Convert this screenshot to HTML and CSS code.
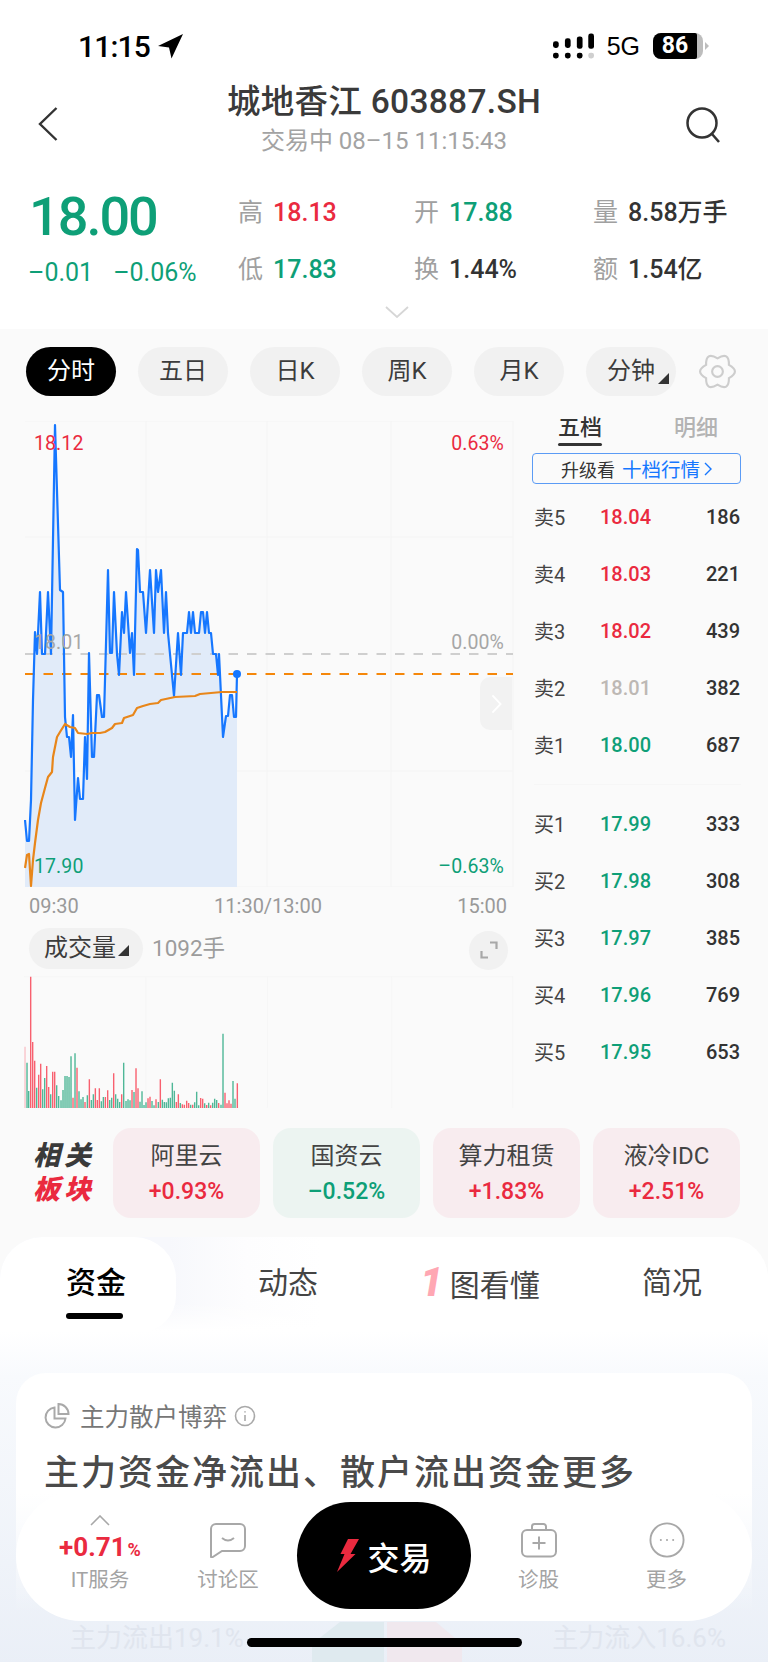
FILE: index.html
```html
<!DOCTYPE html>
<html lang="zh-CN">
<head>
<meta charset="utf-8">
<title>城地香江 603887.SH</title>
<link rel="stylesheet" href="styles.css">
</head>
<body>
<div class="page">
  <header class="top">
    <div class="status">
      <span class="clock">11:15</span>
      <svg class="locate" viewBox="0 0 26 25"><path d="M25 0 0 12l11 1.500L13.500 24.500z"/></svg>
      <span class="status-gap"></span>
      <svg class="signal" viewBox="0 0 43 26">
        <rect x="0" y="8" width="6" height="7" rx="2.500"/><rect x="12.500" y="5" width="6" height="10" rx="2.500"/>
        <rect x="25" y="3" width="6" height="13" rx="2.500"/><rect x="37" y="0" width="6" height="16" rx="2.500"/>
        <rect x="0" y="20" width="6" height="6" rx="2.500"/><rect x="12.500" y="20" width="6" height="6" rx="2.500"/>
        <rect x="25" y="20" width="6" height="6" rx="2.500"/><rect class="signal-off" x="37" y="20" width="6" height="6" rx="2.500"/>
      </svg>
      <span class="network">5G</span>
      <span class="battery"><span class="battery-level">86</span></span>
    </div>
    <nav class="nav">
      <svg class="back" viewBox="0 0 20 34"><path d="M18.500 1 2 17l16.500 16"/></svg>
      <div class="title-block">
        <div class="title">城地香江 603887.SH</div>
        <div class="subtitle">交易中 08–15 11:15:43</div>
      </div>
      <svg class="search" viewBox="0 0 36 36"><circle cx="17" cy="16" r="14.500"/><path d="m27 27 7 8"/></svg>
    </nav>
    <section class="quote">
      <div class="price-col">
        <div class="price down">18.00</div>
        <div class="change down"><span>–0.01</span><span>–0.06%</span></div>
      </div>
      <div class="stats">
        <div class="stat"><span class="stat-label">高</span><span class="up">18.13</span></div>
        <div class="stat"><span class="stat-label">开</span><span class="down">17.88</span></div>
        <div class="stat"><span class="stat-label">量</span><span class="plain">8.58万手</span></div>
        <div class="stat"><span class="stat-label">低</span><span class="down">17.83</span></div>
        <div class="stat"><span class="stat-label">换</span><span class="plain">1.44%</span></div>
        <div class="stat"><span class="stat-label">额</span><span class="plain">1.54亿</span></div>
      </div>
    </section>
    <svg class="expand-quote" viewBox="0 0 24 12"><path d="m1 1 11 10L23 1"/></svg>
  </header>

  <div class="periods">
    <span class="period active">分时</span>
    <span class="period">五日</span>
    <span class="period">日K</span>
    <span class="period">周K</span>
    <span class="period">月K</span>
    <span class="period">分钟<i class="corner corner-period"></i></span>
    <svg class="gear" viewBox="-1 -1 42 42"><path d="M31.690 13.250Q44 20 31.690 26.750Q32 40.780 20 33.500Q8 40.780 8.310 26.750Q-4 20 8.310 13.250Q8 -.78 20 6.500Q32 -.78 31.690 13.250z"/><circle cx="20" cy="20" r="5.500"/></svg>
  </div>

  <main class="market">
    <div class="chart-col">
      <div class="chart">
        <svg class="chart-svg" viewBox="24 421 490 466">
          <g class="grid-lines">
            <path d="M25 421H513M25 537H513M25 771H513M25 887H513M146 421V887M267 421V887M391 421V887M513 421V887"/>
          </g>
          <polygon class="area" points="25,887 25,820 27,841 29,841 31,800 33,700 35,632 37,654 40,592 42,654 45,654 48,592 51,654 55,425 60,590 63,592 65,717 67,737 69,737 71,757 73,715 75,820 78,778 80,799 83,799 85,737 87,779 89,653 92,757 94,757 97,695 99,695 102,717 104,717 108,570 110,653 112,653 114,592 117,654 119,675 122,612 124,633 126,592 130,653 132,633 134,675 137,549 138,550 140,592 143,592 146,633 150,570 154,633 156,570 158,592 161,570 164,633 166,592 168,633 174,696 178,633 181,675 183,633 187,633 189,612 191,633 193,612 195,633 199,633 201,612 203,612 205,633 207,612 209,633 211,633 213,654 216,654 218,675 219,654 223,737 226,716 228,716 230,695 232,695 234,717 236,717 237,674 237,887"/>
          <path class="ref-line" d="M25 654H513"/>
          <path class="cost-line" d="M25 674H513"/>
          <polyline class="price-line" points="25,820 27,841 29,841 31,800 33,700 35,632 37,654 40,592 42,654 45,654 48,592 51,654 55,425 60,590 63,592 65,717 67,737 69,737 71,757 73,715 75,820 78,778 80,799 83,799 85,737 87,779 89,653 92,757 94,757 97,695 99,695 102,717 104,717 108,570 110,653 112,653 114,592 117,654 119,675 122,612 124,633 126,592 130,653 132,633 134,675 137,549 138,550 140,592 143,592 146,633 150,570 154,633 156,570 158,592 161,570 164,633 166,592 168,633 174,696 178,633 181,675 183,633 187,633 189,612 191,633 193,612 195,633 199,633 201,612 203,612 205,633 207,612 209,633 211,633 213,654 216,654 218,675 219,654 223,737 226,716 228,716 230,695 232,695 234,717 236,717 237,674"/>
          <polyline class="avg-line" points="25,868 27,855 29,854 31,886 33,860 35,843 38,820 41,803 45,788 48,777 52,772 53,757 57,737 60,732 65,724 70,727 75,728 78,733 87,734 92,733 100,733 105,732 112,728 115,724 122,723 124,718 133,715 137,708 143,706 150,704 158,703 161,700 175,697 195,696 200,694 222,692 237,692"/>
          <circle class="now-dot" cx="237" cy="674" r="4"/>
        </svg>
        <span class="axis axis-tl up">18.12</span>
        <span class="axis axis-tr up">0.63%</span>
        <span class="axis axis-ml muted">18.01</span>
        <span class="axis axis-mr muted">0.00%</span>
        <span class="axis axis-bl down">17.90</span>
        <span class="axis axis-br down">–0.63%</span>
        <span class="side-handle"><svg viewBox="0 0 12 22"><path d="m1.500 1.500 9 9.500-9 9.500"/></svg></span>
      </div>
      <div class="times"><span>09:30</span><span>11:30/13:00</span><span>15:00</span></div>
      <div class="volume-head">
        <span class="volume-pill">成交量<i class="corner"></i></span>
        <span class="volume-value">1092手</span>
        <span class="fullscreen"><svg viewBox="0 0 18 18"><path d="M10 1.500h6.500V8M8 16.500H1.500V10"/></svg></span>
      </div>
      <svg class="volume-svg" viewBox="72 170 1470 398">
        <path class="vol-grid" d="M72 172H1540M438 172V566M802 172V566M1175 172V566M1538 172V566"/>
        <path class="vol-pale" d="M75 566V382"/>
        <path class="vol-up" d="M92 566V172M98 566V368M104 566V424M116 566V466M122 566V433M140 566V440M146 566V503M158 566V457M164 566V457M219 566V535M231 566V445M255 566V548M268 566V480M286 566V507M292 566V542M298 566V507M316 566V533M323 566V513M341 566V462M365 566V525M396 566V512M408 566V447M414 566V507M444 566V537M450 566V532M468 566V540M481 566V480M529 566V548M535 566V525M547 566V555M553 566V556M560 566V544M566 566V551M578 566V556M602 566V536M608 566V538M620 566V557M632 566V558M656 566V551M675 566V520M681 566V552M687 566V543M693 566V553M712 566V492"/>
        <path class="vol-down" d="M81 566V430M86 566V515M110 566V505M128 566V510M134 566V476M152 566V525M170 566V498M176 566V530M183 566V543M189 566V512M195 566V470M201 566V470M207 566V473M213 566V411M225 566V402M237 566V516M243 566V540M249 566V533M262 566V528M274 566V542M280 566V525M304 566V546M310 566V533M329 566V542M335 566V535M347 566V525M353 566V538M359 566V548M371 566V430M378 566V545M384 566V540M390 566V543M402 566V518M420 566V547M426 566V516M432 566V557M438 566V549M456 566V545M462 566V558M475 566V548M487 566V541M493 566V548M499 566V549M505 566V537M511 566V535M517 566V490M523 566V514M541 566V551M572 566V556M584 566V549M590 566V517M596 566V558M614 566V552M626 566V550M638 566V550M644 566V538M650 566V542M663 566V556M669 566V343M699 566V485M705 566V538"/>
      </svg>
    </div>

    <aside class="book">
      <div class="book-tabs"><span class="book-tab active">五档</span><span class="book-tab">明细</span></div>
      <div class="upgrade">升级看<b>十档行情</b><svg viewBox="0 0 8 14"><path d="m1 1 6 6-6 6"/></svg></div>
      <div class="book-rows">
        <div class="book-row"><span>卖5</span><span class="up">18.04</span><span class="qty">186</span></div>
        <div class="book-row"><span>卖4</span><span class="up">18.03</span><span class="qty">221</span></div>
        <div class="book-row"><span>卖3</span><span class="up">18.02</span><span class="qty">439</span></div>
        <div class="book-row"><span>卖2</span><span class="flat">18.01</span><span class="qty">382</span></div>
        <div class="book-row"><span>卖1</span><span class="down">18.00</span><span class="qty">687</span></div>
      </div>
      <div class="book-rows buys">
        <div class="book-row"><span>买1</span><span class="down">17.99</span><span class="qty">333</span></div>
        <div class="book-row"><span>买2</span><span class="down">17.98</span><span class="qty">308</span></div>
        <div class="book-row"><span>买3</span><span class="down">17.97</span><span class="qty">385</span></div>
        <div class="book-row"><span>买4</span><span class="down">17.96</span><span class="qty">769</span></div>
        <div class="book-row"><span>买5</span><span class="down">17.95</span><span class="qty">653</span></div>
      </div>
    </aside>
  </main>

  <section class="related">
    <div class="related-label"><span>相关</span><span class="up">板块</span></div>
    <div class="sector rise"><span class="sector-name">阿里云</span><span class="up">+0.93%</span></div>
    <div class="sector fall"><span class="sector-name">国资云</span><span class="down">–0.52%</span></div>
    <div class="sector rise"><span class="sector-name">算力租赁</span><span class="up">+1.83%</span></div>
    <div class="sector rise"><span class="sector-name">液冷IDC</span><span class="up">+2.51%</span></div>
  </section>

  <section class="detail">
    <div class="detail-tabs">
      <span class="detail-tab active">资金</span>
      <span class="detail-tab">动态</span>
      <span class="detail-tab"><em class="one">1</em>图看懂</span>
      <span class="detail-tab">简况</span>
    </div>
    <article class="card">
      <div class="card-head">
        <svg class="pie-icon" viewBox="0 0 26 26"><path d="M10.500 4.500a10 10 0 1 0 11 11H10.500z"/><path d="M14.500 1a10 10 0 0 1 10 10h-10z"/></svg>
        <span>主力散户博弈</span>
        <svg class="info-icon" viewBox="0 0 22 22"><circle cx="11" cy="11" r="9.500"/><path d="M11 10v6M11 6.200v1.300"/></svg>
      </div>
      <h2 class="headline">主力资金净流出、散户流出资金更多</h2>
      <div class="flow-row">
        <span>主力流出19.1%</span>
        <svg class="flow-pie" viewBox="0 0 150 41"><path class="flow-out" d="M72 0H28L0 22V41H72z"/><path class="flow-in" d="M75 0h49l26 22V41H75z"/></svg>
        <span>主力流入16.6%</span>
      </div>
    </article>
  </section>

  <footer class="bar">
    <div class="bar-item index">
      <svg class="bar-chevron" viewBox="0 0 20 11"><path d="m1 10 9-9 9 9"/></svg>
      <div class="index-value">+0.71<small>%</small></div>
      <span class="bar-label">IT服务</span>
    </div>
    <div class="bar-item">
      <svg class="bar-icon" viewBox="0 0 38 36"><path d="M7 2h24a5 5 0 0 1 5 5v17a5 5 0 0 1-5 5H13L3 35.500a1 1 0 0 1-1-1V7a5 5 0 0 1 5-5z"/><path d="M13 16q6 5 12 0"/></svg>
      <span class="bar-label">讨论区</span>
    </div>
    <button class="trade" type="button">
      <svg viewBox="0 0 22 33"><path fill="#ea2a3f" d="M11 0h11l-8.500 15h5L0 33l7.500-18h-4z"/></svg>
      <span>交易</span>
    </button>
    <div class="bar-item">
      <svg class="bar-icon" viewBox="0 0 38 36"><rect x="2" y="8" width="34" height="26.500" rx="5"/><path d="M12 8V4.500A2.500 2.500 0 0 1 14.500 2h9A2.500 2.500 0 0 1 26 4.500V8M19 14.500v13M12.500 21h13"/></svg>
      <span class="bar-label">诊股</span>
    </div>
    <div class="bar-item">
      <svg class="bar-icon" viewBox="0 0 38 38"><circle cx="19" cy="19" r="17.500"/><path class="dots" d="M12.500 19h.01M19 19h.01M25.500 19h.01"/></svg>
      <span class="bar-label">更多</span>
    </div>
  </footer>
  <div class="home-indicator"></div>
</div>
</body>
</html>
```
FILE: styles.css
```css
* { box-sizing: border-box; }

html, body { margin: 0; padding: 0; }

body {
  font-family: Roboto, "Noto Sans CJK SC", sans-serif;
  color: #333;
  background: #fafafa;
}

.page {
  position: relative;
  width: 768px;
  height: 1662px;
  overflow: hidden;
  background: #fafafa;
}

.up { color: #ea2a3f; }
.down { color: #0e9f77; }
.flat { color: #bdb8b4; }
.muted { color: #a6a6a6; }
.plain { color: #333; }

/* Header block */
.top {
  height: 329px;
  background: #fff;
  display: flex;
  flex-direction: column;
}

.status {
  height: 78px;
  padding: 14px 65px 0 78px;
  display: flex;
  align-items: center;
}

.clock {
  font-size: 30px;
  font-weight: 500;
  color: #000;
  letter-spacing: -0.8px;
}

.locate { width: 26px; height: 25px; margin-left: 8px; }
.status-gap { flex: 1; }
.signal { width: 41px; height: 26px; fill: #000; }
.signal-off { fill: #cfcfcf; }

.network {
  margin-left: 13px;
  font-family: "Liberation Sans", sans-serif;
  font-size: 25px;
  color: #000;
}

.battery {
  width: 50px;
  height: 26px;
  margin-left: 13px;
  border-radius: 8px;
  background: #bdbdbd;
  position: relative;
  overflow: visible;
}

.battery::after {
  content: "";
  position: absolute;
  left: 52px;
  top: 9px;
  border-left: 4px solid #bdbdbd;
  border-top: 4px solid transparent;
  border-bottom: 4px solid transparent;
}

.battery-level {
  display: block;
  width: 44px;
  height: 26px;
  border-radius: 8px 2px 2px 8px;
  background: #000;
  color: #fff;
  font-size: 23px;
  font-weight: 700;
  line-height: 26px;
  text-align: center;
}

.nav {
  height: 82px;
  display: grid;
  grid-template-columns: 1fr auto 1fr;
}

.back {
  width: 20px;
  height: 34px;
  margin: 29px 0 0 38px;
  fill: none;
  stroke: #333;
  stroke-width: 2.400;
}

.search {
  width: 36px;
  height: 36px;
  margin: 29px 47px 0 0;
  justify-self: end;
  fill: none;
  stroke: #333;
  stroke-width: 2.500;
}

.title-block { padding-top: 4px; text-align: center; }

.title {
  font-size: 33.500px;
  font-weight: 500;
  line-height: 40px;
  color: #3a3a3a;
  letter-spacing: 0.3px;
}

.subtitle {
  margin-top: 3px;
  font-size: 24px;
  line-height: 32px;
  color: #a3a3a3;
}

.quote {
  margin-top: 32px;
  padding-left: 29px;
  display: flex;
}

.price-col { width: 209px; }

.price {
  font-size: 54px;
  font-weight: 500;
  line-height: 50px;
  letter-spacing: -2px;
}

.change {
  margin: 16px 0 0 -1px;
  display: flex;
  gap: 20px;
  font-size: 25px;
  line-height: 30px;
}

.stats {
  padding-top: 4px;
  display: grid;
  grid-template-columns: 176px 179px auto;
  grid-auto-rows: 34px;
  row-gap: 23px;
}

.stat {
  display: flex;
  align-items: baseline;
  gap: 10px;
  font-size: 25px;
  line-height: 34px;
  font-weight: 500;
}

.stat-label { font-size: 25px; font-weight: 400; color: #a0a0a0; }

.expand-quote {
  width: 24px;
  height: 12px;
  margin: 18px 0 0 385px;
  fill: none;
  stroke: #d6d6d6;
  stroke-width: 1.800;
}

/* Period selector */
.periods {
  margin-top: 18px;
  padding-left: 26px;
  display: flex;
  align-items: center;
  gap: 22px;
}

.period {
  position: relative;
  width: 90px;
  height: 49px;
  border-radius: 25px;
  background: #f1f1f1;
  color: #3c3c3c;
  font-size: 24px;
  line-height: 49px;
  text-align: center;
}

.period.active { background: #000; color: #fff; }

.corner {
  display: inline-block;
  width: 11px;
  height: 11px;
  margin-left: 2px;
  background: #333;
  clip-path: polygon(100% 0, 100% 100%, 0 100%);
}

.corner-period { position: absolute; right: 7px; bottom: 12px; margin: 0; }

.gear {
  width: 41px;
  height: 41px;
  margin-left: -1px;
  fill: none;
  stroke: #cdcdcd;
  stroke-width: 2.200;
}

/* Chart and order book */
.market {
  margin-top: 14px;
  padding-left: 24px;
  display: flex;
  align-items: flex-start;
  gap: 18px;
}

.chart-col { width: 490px; padding-top: 11px; }

.chart { position: relative; height: 466px; }

.chart-svg { display: block; width: 490px; height: 466px; }

.grid-lines path { fill: none; stroke: #f4f4f4; stroke-width: 1; }
.area { fill: #e1ebf9; }
.ref-line { fill: none; stroke: #cfcfcf; stroke-width: 2; stroke-dasharray: 9.500 9; }
.cost-line { fill: none; stroke: #f5870a; stroke-width: 2.200; stroke-dasharray: 9.500 9; }
.price-line { fill: none; stroke: #1677ff; stroke-width: 2.200; stroke-linejoin: round; }
.avg-line { fill: none; stroke: #e8861a; stroke-width: 2.200; stroke-linejoin: round; }
.now-dot { fill: #1677ff; }

.axis {
  position: absolute;
  font-size: 19.500px;
  line-height: 24px;
  letter-spacing: 0.1px;
}

.axis-tl { left: 10px; top: 11px; }
.axis-tr { right: 10px; top: 11px; }
.axis-ml { left: 10px; top: 210px; }
.axis-mr { right: 10px; top: 210px; }
.axis-bl { left: 10px; top: 434px; }
.axis-br { right: 10px; top: 434px; }

.side-handle {
  position: absolute;
  right: 2px;
  top: 256px;
  width: 32px;
  height: 53px;
  border-radius: 10px 0 0 10px;
  background: #f2f2f2;
  display: flex;
  align-items: center;
  justify-content: center;
}

.side-handle svg { width: 11px; height: 20px; fill: none; stroke: #fff; stroke-width: 2; }

.times {
  height: 38px;
  margin-bottom: 3px;
  padding: 0 7px 0 5px;
  display: flex;
  justify-content: space-between;
  font-size: 20px;
  line-height: 38px;
  color: #999;
}

.volume-head {
  height: 41px;
  padding: 0 6px 0 5px;
  display: flex;
  align-items: center;
}

.volume-pill {
  height: 41px;
  width: 114px;
  border-radius: 21px;
  background: #f1f1f1;
  color: #3c3c3c;
  font-size: 24px;
  line-height: 41px;
  padding-left: 15px;
  white-space: nowrap;
}

.volume-value {
  margin-left: 9px;
  font-size: 22.500px;
  line-height: 41px;
  color: #9c9c9c;
}

.fullscreen {
  margin-left: auto;
  margin-top: 3px;
  width: 39px;
  height: 39px;
  border-radius: 50%;
  background: #f1f1f1;
  display: flex;
  align-items: center;
  justify-content: center;
}

.fullscreen svg { width: 18px; height: 18px; fill: none; stroke: #a8a8a8; stroke-width: 2.200; }

.volume-svg { display: block; width: 490px; height: 132.670px; margin-top: 7px; }

.vol-grid { fill: none; stroke: #f6f6f6; stroke-width: 3; }
.vol-up { fill: none; stroke: #f8606f; stroke-width: 4.200; }
.vol-down { fill: none; stroke: #4fb797; stroke-width: 4.200; }
.vol-pale { fill: none; stroke: #f9c3c9; stroke-width: 4.200; }

.book { width: 209px; }

.book-tabs {
  padding-left: 26px;
  display: flex;
  gap: 72px;
  height: 36px;
}

.book-tab {
  position: relative;
  font-size: 22px;
  font-weight: 500;
  line-height: 36px;
  color: #b3b3b3;
}

.book-tab.active { color: #333; }

.book-tab.active::after {
  content: "";
  position: absolute;
  left: 0;
  right: 0;
  bottom: 0;
  height: 3px;
  border-radius: 2px;
  background: #333;
}

.upgrade {
  height: 31px;
  margin-top: 7px;
  border: 1px solid #5b9bf5;
  border-radius: 4px;
  display: flex;
  align-items: center;
  justify-content: center;
  font-size: 18px;
  color: #333;
}

.upgrade b {
  margin-left: 7px;
  font-size: 19.500px;
  font-weight: 400;
  color: #1677ff;
}

.upgrade svg { width: 8px; height: 14px; margin-left: 4px; fill: none; stroke: #1677ff; stroke-width: 1.400; }

.book-rows { margin-top: 4px; }

.buys { margin-top: 22px; position: relative; }

.buys::before {
  content: "";
  position: absolute;
  left: 2px;
  right: 0;
  top: -11px;
  height: 1px;
  background: #f6f6f6;
}

.book-row {
  height: 57px;
  padding-left: 2px;
  display: grid;
  grid-template-columns: 66px 1fr auto;
  align-items: center;
  font-size: 20px;
  color: #444;
}

.book-row > span:nth-child(2) { font-weight: 500; }
.book-row > .qty { font-weight: 500; color: #333; padding-right: 1px; }

/* Related sectors */
.related {
  margin-top: 19px;
  padding-left: 33px;
  display: flex;
  align-items: center;
  gap: 13px;
  position: relative;
}

.related-label {
  width: 67px;
  display: flex;
  flex-direction: column;
  font-size: 27px;
  font-weight: 900;
  font-style: italic;
  line-height: 34px;
  letter-spacing: 4px;
  color: #3a3a3a;
}

.sector {
  width: 147px;
  height: 90px;
  padding-top: 3px;
  border-radius: 18px;
  display: flex;
  flex-direction: column;
  align-items: center;
  justify-content: center;
  gap: 2px;
  font-size: 23px;
  line-height: 34px;
  font-weight: 500;
}

.sector.rise { background: #f8ecef; }
.sector.fall { background: #ecf4f1; }
.sector-name { font-size: 24px; font-weight: 400; color: #444; }

/* Detail panel */
.detail {
  margin-top: 19px;
  height: 430px;
  border-radius: 42px 42px 0 0;
  overflow: hidden;
  background: linear-gradient(#fff 94px, #f8fafd 140px, #eaeff7 100%);
}

.detail-tabs {
  height: 94px;
  display: grid;
  grid-template-columns: repeat(4, 192px);
  background:
    linear-gradient(rgba(255, 255, 255, 0) 70%, #fff 100%),
    linear-gradient(90deg, #f7f8fc 22%, #fdfdfe 32%, #fff 42%);
  font-size: 30px;
  line-height: 92px;
  text-align: center;
  color: #444;
}

.detail-tab {
  position: relative;
}

.detail-tab.active {
  width: 176px;
  border-radius: 42px 42px 36px 0;
  background: #fff;
  padding-left: 16px;
  color: #000;
  font-weight: 500;
}

.detail-tab.active::after {
  content: "";
  position: absolute;
  left: 66px;
  top: 76px;
  width: 57px;
  height: 6px;
  border-radius: 3px;
  background: #000;
}

.one {
  margin-right: 7px;
  font-size: 40px;
  font-weight: 900;
  color: #ffa7b3;
}

.card {
  margin: 42px 16px 0;
  height: 300px;
  border-radius: 30px 30px 0 0;
  padding: 29px 28px 0;
  background: linear-gradient(#fff 40%, rgba(255, 255, 255, 0) 80%);
}

.card-head {
  height: 28px;
  display: flex;
  align-items: center;
  font-size: 24.500px;
  color: #777;
}

.pie-icon {
  width: 26px;
  height: 26px;
  margin-right: 10px;
  fill: none;
  stroke: #a9a9a9;
  stroke-width: 2;
}

.info-icon {
  width: 22px;
  height: 22px;
  margin-left: 7px;
  fill: none;
  stroke: #a9a9a9;
  stroke-width: 1.600;
}

.headline {
  margin: 22px 0 0;
  font-size: 35px;
  font-weight: 500;
  line-height: 44px;
  letter-spacing: 2px;
  color: #4a4a4a;
  white-space: nowrap;
}

.flow-row {
  margin: 126px 0 0 -2px;
  padding: 2px 0 0 28px;
  width: 684px;
  display: flex;
  align-items: flex-start;
  justify-content: space-between;
  font-size: 26px;
  line-height: 28px;
  color: #e0e5ee;
}

.flow-pie { width: 150px; height: 41px; margin: -2px 22px 0 0; }
.flow-out { fill: #dfeaef; }
.flow-in { fill: #f0e8ee; }

/* Floating bottom bar */
.bar {
  position: absolute;
  left: 16px;
  top: 1490px;
  width: 736px;
  height: 131px;
  border-radius: 66px;
  background: #fff;
  padding: 0 20px;
  display: flex;
}

.bar-item {
  width: 128px;
  padding-top: 32px;
  display: flex;
  flex-direction: column;
  align-items: center;
}

.bar-item.index { padding-top: 25px; }

.bar-chevron { width: 20px; height: 11px; fill: none; stroke: #a8a8a8; stroke-width: 1.600; }

.index-value {
  margin-top: 5px;
  height: 32px;
  font-size: 26px;
  font-weight: 700;
  line-height: 32px;
  color: #ea2a3f;
  white-space: nowrap;
}

.index-value small { margin-left: 2px; font-size: 18px; }

.bar-icon { width: 38px; height: 36px; fill: none; stroke: #a8a8a8; stroke-width: 2; }

.dots { stroke-width: 2.200; stroke-linecap: round; }

.bar-label {
  margin-top: 10px;
  font-size: 20.500px;
  line-height: 24px;
  color: #a3a3a3;
}

.index .bar-label { margin-top: 5px; }

.trade {
  width: 174px;
  height: 107px;
  margin: 12px 4px 0 4.500px;
  padding: 0 0 0 2px;
  border: 0;
  border-radius: 54px;
  background: #000;
  color: #fff;
  font-family: inherit;
  font-size: 32px;
  font-weight: 500;
  display: flex;
  align-items: center;
  justify-content: center;
  gap: 8px;
}

.trade svg { width: 22px; height: 33px; }

.home-indicator {
  position: absolute;
  left: 247px;
  top: 1638px;
  width: 275px;
  height: 9px;
  border-radius: 5px;
  background: #000;
}
```
